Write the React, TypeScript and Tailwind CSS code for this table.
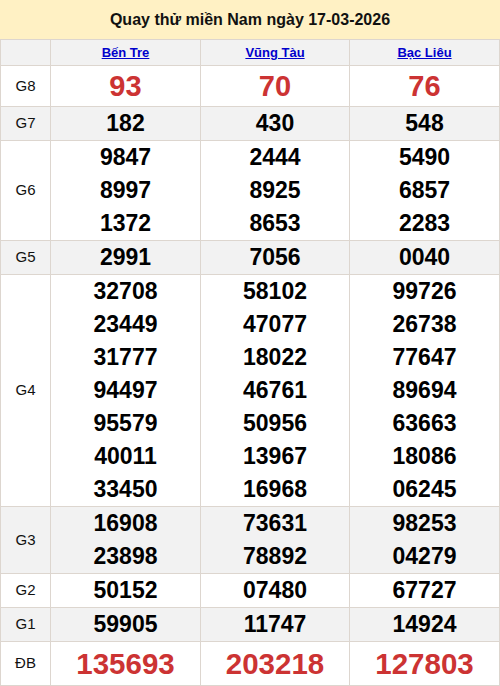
const provinces = ["Bến Tre", "Vũng Tàu", "Bạc Liêu"];

type Prize = {
  label: string;
  values: string[][];
  kind?: "g8" | "db";
  shaded?: boolean;
};

const prizes: Prize[] = [
  { label: "G8", values: [["93"], ["70"], ["76"]], kind: "g8" },
  { label: "G7", values: [["182"], ["430"], ["548"]], shaded: true },
  {
    label: "G6",
    values: [
      ["9847", "8997", "1372"],
      ["2444", "8925", "8653"],
      ["5490", "6857", "2283"],
    ],
  },
  { label: "G5", values: [["2991"], ["7056"], ["0040"]], shaded: true },
  {
    label: "G4",
    values: [
      ["32708", "23449", "31777", "94497", "95579", "40011", "33450"],
      ["58102", "47077", "18022", "46761", "50956", "13967", "16968"],
      ["99726", "26738", "77647", "89694", "63663", "18086", "06245"],
    ],
  },
  {
    label: "G3",
    values: [
      ["16908", "23898"],
      ["73631", "78892"],
      ["98253", "04279"],
    ],
    shaded: true,
  },
  { label: "G2", values: [["50152"], ["07480"], ["67727"]] },
  { label: "G1", values: [["59905"], ["11747"], ["14924"]], shaded: true },
  { label: "ĐB", values: [["135693"], ["203218"], ["127803"]], kind: "db" },
];

function numberClass(kind?: Prize["kind"]) {
  if (kind === "g8") return "text-[29px] leading-[40px] text-[#cc3333]";
  if (kind === "db") return "text-[29.5px] leading-[43px] text-[#cc3333]";
  return "text-[23px] leading-[33px] text-black";
}

export default function App() {
  return (
    <div className="w-[500px] bg-white font-['Liberation_Sans',Arial,sans-serif]">
      <div className="flex h-[39px] items-center justify-center bg-[#fff1c4] text-[16px] font-bold text-[#111]">
        Quay thử miền Nam ngày 17-03-2026
      </div>
      <table className="w-[500px] table-fixed border-collapse">
        <colgroup>
          <col className="w-[50px]" />
          <col className="w-[150px]" />
          <col className="w-[149px]" />
          <col className="w-[150px]" />
        </colgroup>
        <thead>
          <tr className="h-[26px] bg-[#f2f2f2]">
            <th className="border border-[#ddd6cf]"></th>
            {provinces.map((p) => (
              <th key={p} className="border border-[#ddd6cf] p-0 text-[13px] font-bold">
                <a href="#" className="text-[#0000cc] underline">
                  {p}
                </a>
              </th>
            ))}
          </tr>
        </thead>
        <tbody>
          {prizes.map((prize) => (
            <tr key={prize.label} className={prize.shaded ? "bg-[#f2f2f2]" : "bg-white"}>
              <td className="border border-[#ddd6cf] p-0 text-center text-[15px] text-[#111]">
                {prize.label}
              </td>
              {prize.values.map((col, i) => (
                <td key={i} className="border border-[#ddd6cf] p-0 text-center">
                  {col.map((v) => (
                    <div key={v} className={`font-bold ${numberClass(prize.kind)}`}>
                      {v}
                    </div>
                  ))}
                </td>
              ))}
            </tr>
          ))}
        </tbody>
      </table>
    </div>
  );
}
